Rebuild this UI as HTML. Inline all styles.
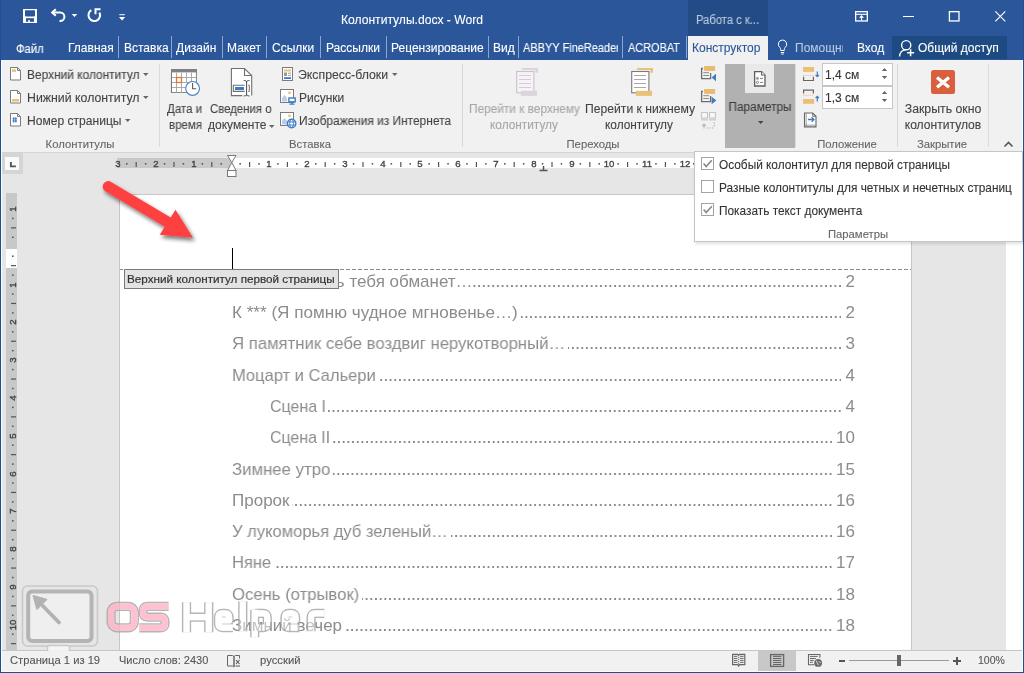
<!DOCTYPE html>
<html><head><meta charset="utf-8"><style>
html,body{margin:0;padding:0}
body{width:1024px;height:673px;position:relative;overflow:hidden;font-family:"Liberation Sans", sans-serif;background:#fff}
.t{position:absolute;white-space:nowrap;line-height:1;will-change:transform;-webkit-text-stroke:0.1px currentColor}
.r{position:absolute;display:block}
</style></head><body>
<div class="r" style="left:0px;top:0px;width:1024px;height:60px;background:#2B579A;"></div>
<div class="r" style="left:0px;top:60px;width:1024px;height:92px;background:#F1F1F1;"></div>
<div class="r" style="left:0px;top:152px;width:1024px;height:1px;background:#D4D4D4;"></div>
<div class="r" style="left:0px;top:153px;width:1024px;height:497px;background:#E6E6E6;"></div>
<div class="r" style="left:119px;top:194px;width:793px;height:456px;background:#C6C6C6;"></div>
<div class="r" style="left:120px;top:195px;width:791px;height:455px;background:#FFFFFF;"></div>
<div class="r" style="left:1006px;top:153px;width:17px;height:497px;background:#FFFFFF;"></div>
<div class="r" style="left:0px;top:650px;width:1024px;height:1px;background:#C6C6C6;"></div>
<div class="r" style="left:0px;top:651px;width:1024px;height:21px;background:#F1F1F1;"></div>
<div class="r" style="left:1px;top:60px;width:1px;height:612px;background:#FCFBF8;"></div>
<div class="r" style="left:1022px;top:60px;width:1px;height:612px;background:#FCFBF8;"></div>
<div class="r" style="left:0px;top:671px;width:1024px;height:1px;background:#FCFBF8;"></div>
<div class="r" style="left:0px;top:0px;width:1px;height:673px;background:#1F4E94;"></div>
<div class="r" style="left:1023px;top:0px;width:1px;height:673px;background:#1F4E94;"></div>
<div class="r" style="left:0px;top:672px;width:1024px;height:1px;background:#1F4E94;"></div>
<div class="r" style="left:688px;top:0px;width:80px;height:36px;background:#234B85;"></div>
<div class="t" style="left:696.00px;top:14.00px;font-size:12px;color:#BAC8DE;transform:scaleX(0.935);transform-origin:0 0;">Работа с к...</div>
<div class="t" style="left:340.50px;top:14.00px;font-size:12.1px;color:#FFFFFF;">Колонтитулы.docx - Word</div>
<svg class="r" style="left:22px;top:8px;" width="16" height="16" viewBox="0 0 16 16"><rect x="1" y="1" width="14" height="14" fill="#fff"/><path d="M3 2.3h10v5.4l-0.9 0.9H3.9L3 7.7z" fill="#2B579A"/><rect x="4" y="10.2" width="8" height="3.6" fill="#2B579A"/><rect x="6" y="12.2" width="2" height="1.6" fill="#fff"/></svg>
<svg class="r" style="left:50px;top:7px;" width="18" height="17" viewBox="0 0 18 17"><path d="M5.8 2.2L2.2 5.5 5.8 8.8" fill="none" stroke="#fff" stroke-width="2.1"/><path d="M3 5.5h7.2a4.2 4.2 0 0 1 0 8.4H9.5" fill="none" stroke="#fff" stroke-width="2"/></svg>
<svg class="r" style="left:71px;top:13px;" width="7" height="5" viewBox="0 0 7 5"><path d="M0.7 1h5.6l-2.8 3z" fill="#fff"/></svg>
<svg class="r" style="left:86px;top:7px;" width="16" height="17" viewBox="0 0 16 17"><path d="M5.3 3.2A5.8 5.8 0 1 0 13.4 5.5" fill="none" stroke="#fff" stroke-width="2"/><path d="M9.5 7.2V2.2h5" fill="none" stroke="#fff" stroke-width="2"/></svg>
<svg class="r" style="left:118px;top:13px;" width="8" height="9" viewBox="0 0 8 9"><rect x="1.3" y="1.2" width="5.5" height="1" fill="#fff"/><path d="M1 4h6.2l-3.1 3.5z" fill="#fff"/></svg>
<svg class="r" style="left:854px;top:10px;" width="16" height="12" viewBox="0 0 16 12"><rect x="1.65" y="1.65" width="11.7" height="9.3" fill="none" stroke="#fff" stroke-width="1.3"/><path d="M1.6 4.3h11.8" stroke="#fff" stroke-width="1.1"/><path d="M7.5 10.6V6M5.6 7.8l1.9-1.9 1.9 1.9" fill="none" stroke="#fff" stroke-width="1.1"/></svg>
<div class="r" style="left:903px;top:15.6px;width:10.5px;height:1.3px;background:#FFFFFF;"></div>
<svg class="r" style="left:947px;top:10px;" width="14" height="12" viewBox="0 0 14 12"><rect x="2.4" y="1.65" width="9.6" height="9.3" fill="none" stroke="#fff" stroke-width="1.3"/></svg>
<svg class="r" style="left:993px;top:10px;" width="14" height="13" viewBox="0 0 14 13"><path d="M2.3 1.3l10 10M12.3 1.3l-10 10" stroke="#fff" stroke-width="1.15"/></svg>
<div class="t" style="left:16.00px;top:43.00px;font-size:12px;color:#FFFFFF;transform:scaleX(0.94);transform-origin:0 0;">Файл</div>
<div class="t" style="left:68.20px;top:42.00px;font-size:12px;color:#FFFFFF;">Главная</div>
<div class="t" style="left:123.50px;top:42.00px;font-size:12px;color:#FFFFFF;">Вставка</div>
<div class="t" style="left:176.00px;top:42.00px;font-size:12px;color:#FFFFFF;">Дизайн</div>
<div class="t" style="left:227.00px;top:42.00px;font-size:12px;color:#FFFFFF;">Макет</div>
<div class="t" style="left:272.00px;top:42.00px;font-size:12px;color:#FFFFFF;">Ссылки</div>
<div class="t" style="left:326.00px;top:42.00px;font-size:12px;color:#FFFFFF;">Рассылки</div>
<div class="t" style="left:391.00px;top:42.00px;font-size:12px;color:#FFFFFF;">Рецензирование</div>
<div class="t" style="left:493.00px;top:42.00px;font-size:12px;color:#FFFFFF;">Вид</div>
<div class="r" style="left:523px;top:36px;width:95px;height:22px;overflow:hidden"><div class="t" style="left:0;top:6px;font-size:12px;color:#fff;transform:scaleX(0.915);transform-origin:0 0">ABBYY FineReader</div></div>
<div class="t" style="left:628.00px;top:42.00px;font-size:12px;color:#FFFFFF;transform:scaleX(0.91);transform-origin:0 0;">ACROBAT</div>
<div class="r" style="left:118px;top:36px;width:1px;height:22px;background:#8EA6CC;"></div>
<div class="r" style="left:171px;top:36px;width:1px;height:22px;background:#8EA6CC;"></div>
<div class="r" style="left:222px;top:36px;width:1px;height:22px;background:#8EA6CC;"></div>
<div class="r" style="left:266px;top:36px;width:1px;height:22px;background:#8EA6CC;"></div>
<div class="r" style="left:320px;top:36px;width:1px;height:22px;background:#8EA6CC;"></div>
<div class="r" style="left:386px;top:36px;width:1px;height:22px;background:#8EA6CC;"></div>
<div class="r" style="left:488px;top:36px;width:1px;height:22px;background:#8EA6CC;"></div>
<div class="r" style="left:518px;top:36px;width:1px;height:22px;background:#8EA6CC;"></div>
<div class="r" style="left:622px;top:36px;width:1px;height:22px;background:#8EA6CC;"></div>
<div class="r" style="left:686px;top:36px;width:1px;height:22px;background:#8EA6CC;"></div>
<div class="r" style="left:688px;top:36px;width:80px;height:24px;background:#F1F1F1;"></div>
<div class="t" style="left:692.00px;top:42.00px;font-size:12px;color:#2B579A;">Конструктор</div>
<svg class="r" style="left:777px;top:39px;" width="11" height="16" viewBox="0 0 11 16"><path d="M5.5 1a4.2 4.2 0 0 0-2.6 7.5c.5.5.8 1.2.8 2v1h3.6v-1c0-.8.3-1.5.8-2A4.2 4.2 0 0 0 5.5 1z" fill="none" stroke="#fff" stroke-width="1"/><path d="M3.8 13.5h3.4M4.3 15h2.4" stroke="#fff"/></svg>
<div class="r" style="left:795px;top:36px;width:48px;height:22px;overflow:hidden"><div class="t" style="left:0;top:6px;font-size:12px;color:#B9C8DF">Помощник</div></div>
<div class="t" style="left:857.00px;top:42.00px;font-size:12px;color:#FFFFFF;">Вход</div>
<div class="r" style="left:892px;top:36px;width:115px;height:23px;background:#1E4A82;"></div>
<svg class="r" style="left:898px;top:38px;" width="18" height="20" viewBox="0 0 18 20"><circle cx="8.2" cy="7.2" r="4.6" fill="none" stroke="#fff" stroke-width="1.4"/><path d="M1.6 18.5c0-4 2.6-6.6 6.2-6.8" fill="none" stroke="#fff" stroke-width="1.4"/><path d="M12.6 11.2v7M9.1 14.7h7" stroke="#fff" stroke-width="1.5"/></svg>
<div class="t" style="left:918.00px;top:42.00px;font-size:12px;color:#FFFFFF;">Общий доступ</div>
<div class="r" style="left:159px;top:64px;width:1px;height:83px;background:#DADADA;"></div>
<div class="r" style="left:462px;top:64px;width:1px;height:83px;background:#DADADA;"></div>
<div class="r" style="left:897px;top:64px;width:1px;height:83px;background:#DADADA;"></div>
<div class="r" style="left:988px;top:64px;width:1px;height:83px;background:#DADADA;"></div>
<div class="t" style="left:-119.70px;width:400px;text-align:center;top:139.00px;font-size:11.3px;color:#666666;">Колонтитулы</div>
<div class="t" style="left:110.00px;width:400px;text-align:center;top:139.00px;font-size:11.3px;color:#666666;">Вставка</div>
<div class="t" style="left:393.00px;width:400px;text-align:center;top:139.00px;font-size:11.3px;color:#666666;">Переходы</div>
<div class="t" style="left:646.50px;width:400px;text-align:center;top:139.00px;font-size:11.3px;color:#666666;">Положение</div>
<div class="t" style="left:742.30px;width:400px;text-align:center;top:139.00px;font-size:11.3px;color:#666666;">Закрытие</div>
<svg class="r" style="left:1003px;top:140px;" width="11" height="8" viewBox="0 0 11 8"><path d="M1.5 6.5L5.5 2.5 9.5 6.5" fill="none" stroke="#555" stroke-width="1.6"/></svg>
<svg class="r" style="left:10px;top:67px;" width="12" height="14" viewBox="0 0 12 14"><path d="M0.5 0.5h7l3 3v9.5h-10z" fill="#fff" stroke="#7B7B7B"/><path d="M7.5 0.5v3h3" fill="none" stroke="#7B7B7B"/><rect x="2" y="2.3" width="4" height="2.6" fill="#EBC178"/></svg>
<svg class="r" style="left:10px;top:90px;" width="12" height="14" viewBox="0 0 12 14"><path d="M0.5 0.5h7l3 3v9.5h-10z" fill="#fff" stroke="#7B7B7B"/><path d="M7.5 0.5v3h3" fill="none" stroke="#7B7B7B"/><rect x="2" y="9" width="7" height="2.6" fill="#EBC178"/></svg>
<svg class="r" style="left:10px;top:113px;" width="12" height="14" viewBox="0 0 12 14"><path d="M0.5 0.5h7l3 3v9.5h-10z" fill="#fff" stroke="#7B7B7B"/><path d="M7.5 0.5v3h3" fill="none" stroke="#7B7B7B"/><path d="M3.7 4.3v5.2M5.8 4.3v5.2M2.5 5.8h4.6M2.5 8h4.6" stroke="#3E7BC4" stroke-width="1.1"/></svg>
<div class="t" style="left:26.50px;top:69.00px;font-size:12px;color:#444444;transform:scaleX(0.9922);transform-origin:0 0;">Верхний колонтитул</div>
<div class="t" style="left:26.50px;top:92.00px;font-size:12px;color:#444444;transform:scaleX(1.0268);transform-origin:0 0;">Нижний колонтитул</div>
<div class="t" style="left:26.50px;top:115.00px;font-size:12px;color:#444444;transform:scaleX(1.0059);transform-origin:0 0;">Номер страницы</div>
<svg class="r" style="left:143px;top:73px;" width="6" height="4" viewBox="0 0 6 4"><path d="M0 0h5.5l-2.75 3z" fill="#666"/></svg>
<svg class="r" style="left:143px;top:96px;" width="6" height="4" viewBox="0 0 6 4"><path d="M0 0h5.5l-2.75 3z" fill="#666"/></svg>
<svg class="r" style="left:124.5px;top:119px;" width="6" height="4" viewBox="0 0 6 4"><path d="M0 0h5.5l-2.75 3z" fill="#666"/></svg>
<svg class="r" style="left:170px;top:68px;" width="32" height="30" viewBox="0 0 32 30"><path d="M1.5 4v20.5h17M26.3 4v10.5" fill="none" stroke="#7A7A7A" stroke-width="1.1"/><rect x="1" y="1" width="26" height="3.6" fill="#808080"/><rect x="2" y="4.6" width="23.8" height="19.5" fill="#fff"/><path d="M6.5 4.6v20M11.5 4.6v20M16.5 4.6v10M21.5 4.6v10M2 9.5h24M2 14.5h24M2 19.5h16" stroke="#ABABAB" stroke-width="1"/><rect x="6.5" y="9.5" width="5" height="5" fill="#fff" stroke="#E0782F" stroke-width="1.3"/><circle cx="22.6" cy="20.4" r="6.9" fill="#fff" stroke="#4A86C8" stroke-width="1.2"/><path d="M22.6 15v5.7h3.6" fill="none" stroke="#5A5A5A" stroke-width="1.1"/></svg>
<div class="t" style="left:166.50px;top:103.00px;font-size:12px;color:#444444;transform:scaleX(0.9560);transform-origin:0 0;">Дата и</div>
<div class="t" style="left:168.50px;top:119.00px;font-size:12px;color:#444444;transform:scaleX(0.9573);transform-origin:0 0;">время</div>
<svg class="r" style="left:230px;top:67px;" width="24" height="30" viewBox="0 0 24 30"><path d="M1.4 1.5h13.1l7.2 7v20.1H1.4z" fill="#fff"/><path d="M12.2 28.6H1.4V1.5h13.1l7.2 7v20.1" fill="none" stroke="#707070" stroke-width="1.1"/><path d="M14.5 1.5v7h7.2" fill="none" stroke="#707070" stroke-width="1.1"/><path d="M14.6 18.2H3.3v6.2h11.3" fill="none" stroke="#707070" stroke-width="1.1"/><rect x="5" y="20" width="9" height="3" fill="#3E7BC4"/><path d="M18.2 18.2h1.1v6.2h-1.1" fill="none" stroke="#707070" stroke-width="1"/><path d="M16.6 14v14.4M13.7 13.5c1.6 0 2.9.4 2.9 1.4c0-1 1.3-1.4 2.9-1.4M13.7 28.9c1.6 0 2.9-.4 2.9-1.4c0 1 1.3 1.4 2.9 1.4" fill="none" stroke="#4A4A4A" stroke-width="1"/></svg>
<div class="t" style="left:210.00px;top:103.00px;font-size:12px;color:#444444;transform:scaleX(0.9487);transform-origin:0 0;">Сведения о</div>
<div class="t" style="left:207.50px;top:119.00px;font-size:12px;color:#444444;transform:scaleX(0.9998);transform-origin:0 0;">документе</div>
<svg class="r" style="left:268.5px;top:125px;" width="6" height="4" viewBox="0 0 6 4"><path d="M0 0h5.5l-2.75 3z" fill="#666"/></svg>
<svg class="r" style="left:281px;top:66px;" width="13" height="15" viewBox="0 0 13 15"><rect x="1.5" y="1.5" width="10" height="13" fill="#fff" stroke="#7B7B7B"/><rect x="3" y="3.5" width="7" height="2" fill="#EBC178"/><rect x="3" y="6.5" width="3" height="3.5" fill="#9A9A9A"/><path d="M7 7.2h3M7 9.3h3" stroke="#9A9A9A"/><rect x="3" y="11.2" width="7" height="1.8" fill="#3E7BC4"/></svg>
<div class="t" style="left:298.20px;top:69.00px;font-size:12px;color:#444444;transform:scaleX(1.0233);transform-origin:0 0;">Экспресс-блоки</div>
<svg class="r" style="left:392px;top:73px;" width="6" height="4" viewBox="0 0 6 4"><path d="M0 0h5.5l-2.75 3z" fill="#666"/></svg>
<svg class="r" style="left:280px;top:89px;" width="17" height="17" viewBox="0 0 17 17"><rect x="0.5" y="0.5" width="13" height="13" fill="#fff" stroke="#7B7B7B"/><circle cx="9.5" cy="3.8" r="1.4" fill="#EBC178"/><path d="M2 12.5V8.5l2.5-2.5 2.5 2.5v4z" fill="#B7D0EA"/><rect x="8.9" y="9" width="6.3" height="3.8" fill="#fff" stroke="#3E7BC4" stroke-width="1.4"/><path d="M12 13v1.6M9.5 15.2h5" stroke="#3E7BC4" stroke-width="1.3"/></svg>
<div class="t" style="left:298.70px;top:92.00px;font-size:12px;color:#444444;">Рисунки</div>
<svg class="r" style="left:280px;top:112px;" width="17" height="17" viewBox="0 0 17 17"><rect x="0.5" y="0.5" width="13" height="13" fill="#fff" stroke="#7B7B7B"/><circle cx="9.5" cy="3.8" r="1.4" fill="#EBC178"/><path d="M2 12.5V8.5l2.5-2.5 2.5 2.5v4z" fill="#B7D0EA"/><circle cx="11.6" cy="11.5" r="4.2" fill="#fff" stroke="#3E7BC4" stroke-width="1.4"/><path d="M8.3 10h6.6M8.3 13h6.6" fill="none" stroke="#3E7BC4" stroke-width="1"/><ellipse cx="11.6" cy="11.5" rx="2" ry="4" fill="none" stroke="#3E7BC4" stroke-width="0.9"/></svg>
<div class="t" style="left:298.70px;top:115.00px;font-size:12px;color:#444444;transform:scaleX(0.9922);transform-origin:0 0;">Изображения из Интернета</div>
<svg class="r" style="left:515px;top:67px;" width="24" height="30" viewBox="0 0 24 30"><path d="M7 0.9h16v4.8h-2.7V2.9H7z" fill="#DAD5DA"/><rect x="1.7" y="4.5" width="17.2" height="21.3" fill="#F7F2F7" stroke="#C8C3C8" stroke-width="1.1"/><path d="M4 8.5h12M4 12.5h12M4 16.5h12M4 20.5h12" stroke="#D3CED3" stroke-width="1"/><rect x="5.9" y="23.8" width="16.1" height="5.1" fill="#DAD5DA"/></svg>
<div class="t" style="left:469.00px;top:103.00px;font-size:12px;color:#A6A6A6;transform:scaleX(0.9857);transform-origin:0 0;">Перейти к верхнему</div>
<div class="t" style="left:490.00px;top:120.00px;font-size:11.85px;color:#A6A6A6;">колонтитулу</div>
<svg class="r" style="left:630px;top:67px;" width="24" height="30" viewBox="0 0 24 30"><path d="M7 0.9h16v4.8h-2.7V2.9H7z" fill="#EBC178"/><rect x="1.7" y="4.5" width="17.2" height="21.3" fill="#fff" stroke="#7A7A7A" stroke-width="1.1"/><path d="M4 8.5h12M4 12.5h12M4 16.5h12M4 20.5h12" stroke="#A8A8A8" stroke-width="1"/><rect x="5.9" y="23.8" width="16.1" height="5.1" fill="#EBC178"/></svg>
<div class="t" style="left:584.80px;top:103.00px;font-size:12px;color:#444444;transform:scaleX(1.0137);transform-origin:0 0;">Перейти к нижнему</div>
<div class="t" style="left:604.70px;top:120.00px;font-size:11.85px;color:#444444;">колонтитулу</div>
<svg class="r" style="left:696px;top:62px;" width="26" height="70" viewBox="0 0 26 70"><path d="M7 6.5H5.6V16.7H14.6V11" fill="none" stroke="#6E6E6E" stroke-width="1.3"/><rect x="8.1" y="4" width="11" height="4.9" fill="#E8BC6E"/><path d="M7.3 10.7h5.7M7.3 13.5h5.7" stroke="#8A8A8A" stroke-width="1"/><path d="M20 11.7v7.6l-4.4-3.8z" fill="#3E7BC4"/><path d="M7 29.5H5.6V39.7H14.6V34" fill="none" stroke="#6E6E6E" stroke-width="1.3"/><rect x="8.1" y="27" width="11" height="4.9" fill="#E8BC6E"/><path d="M7.3 33.7h5.7M7.3 36.5h5.7" stroke="#8A8A8A" stroke-width="1"/><path d="M15.6 34.7v7.6l4.8-3.8z" fill="#3E7BC4"/><path d="M5.5 50.5h6v5.5h-6zM13.5 50.5h6v5.5h-6z" fill="#F8F6F8" stroke="#C6C6C6" stroke-width="1.1"/><rect x="5" y="56.6" width="7" height="2" fill="#D2D2D2"/><rect x="13" y="56.6" width="7" height="2" fill="#D2D2D2"/><path d="M8 66.5v-4.5M6.2 63.8L8 62l1.8 1.8" fill="none" stroke="#B0B0B0" stroke-width="1.1"/><path d="M11 66h1.2M13.5 66h1.2M16 66h1.2M18.2 60.5v1.2M18.2 63v1.2" stroke="#A8A8A8" stroke-width="1.2"/></svg>
<div class="r" style="left:725px;top:64px;width:70px;height:84px;background:#B1B1B1;"></div>
<div class="r" style="left:745px;top:64px;width:29px;height:29px;background:#E9E9E9;"></div>
<svg class="r" style="left:753px;top:70px;" width="14" height="18" viewBox="0 0 14 18"><path d="M1.6 1.6h7l3.4 3.4v11h-10.4z" fill="#fff" stroke="#5E5E5E" stroke-width="1.3"/><path d="M8.6 1.6v3.4h3.4" fill="#fff" stroke="#5E5E5E" stroke-width="1.1"/><circle cx="4.4" cy="8.4" r="1.1" fill="#999" stroke="#888" stroke-width="0.6"/><circle cx="4.4" cy="12.4" r="1.1" fill="none" stroke="#777" stroke-width="0.9"/><path d="M7 8.4h3M7 12.4h3" stroke="#777" stroke-width="0.9"/></svg>
<div class="t" style="left:560.00px;width:400px;text-align:center;top:101.00px;font-size:12px;color:#3C3C3C;transform:scaleX(0.9849);transform-origin:50% 0;">Параметры</div>
<svg class="r" style="left:757.8px;top:121px;" width="6" height="4" viewBox="0 0 6 4"><path d="M0 0h5.5l-2.75 3z" fill="#444"/></svg>
<div class="r" style="left:795px;top:64px;width:1px;height:83px;background:#DADADA;"></div>
<svg class="r" style="left:798px;top:62px;" width="26" height="70" viewBox="0 0 26 70"><rect x="5" y="5" width="11.1" height="4.9" fill="#EDBE76"/><path d="M5 13.5h11" stroke="#EDBE76" stroke-width="1.1" stroke-dasharray="1.1 1.1"/><path d="M5.6 14.8v3.7h9.8v-3.7" fill="none" stroke="#666" stroke-width="1.2"/><path d="M19.3 9.6v5M17.6 12.9l1.7 1.8 1.7-1.8" fill="none" stroke="#3E7BC4" stroke-width="1.2"/><path d="M5.6 31.4v-3.3h9.8v3.3" fill="none" stroke="#666" stroke-width="1.2"/><path d="M5 33.3h11" stroke="#EDBE76" stroke-width="1.1" stroke-dasharray="1.1 1.1"/><rect x="5" y="37" width="11.1" height="4.8" fill="#EDBE76"/><path d="M19.3 39.5v-5M17.6 36.2l1.7-1.8 1.7 1.8" fill="none" stroke="#3E7BC4" stroke-width="1.2"/><path d="M6.5 51h8.2l3.3 3.3v10.6H6.5z" fill="#fff" stroke="#666" stroke-width="1.1"/><path d="M14.7 51v3.3h3.3" fill="none" stroke="#666" stroke-width="0.9"/><path d="M8.2 51v13.9M6.5 63.2h11.5" stroke="#888" stroke-width="0.8"/><path d="M10 57.5h6M13.6 55.2l2.4 2.3-2.4 2.3" fill="none" stroke="#3E7BC4" stroke-width="1.3"/></svg>
<div class="r" style="left:822px;top:63px;width:71px;height:23px;background:#C6C6C6;"></div>
<div class="r" style="left:823px;top:64px;width:69px;height:21px;background:#FFFFFF;"></div>
<div class="t" style="left:825.30px;top:69.00px;font-size:12px;color:#333;">1,4 см</div>
<svg class="r" style="left:881px;top:67px;" width="7" height="14" viewBox="0 0 7 14"><path d="M0.8 4h5.4L3.5 1z" fill="#666"/><path d="M0.8 9h5.4L3.5 12z" fill="#666"/></svg>
<div class="r" style="left:822px;top:86px;width:71px;height:23px;background:#C6C6C6;"></div>
<div class="r" style="left:823px;top:87px;width:69px;height:21px;background:#FFFFFF;"></div>
<div class="t" style="left:825.30px;top:92.00px;font-size:12px;color:#333;">1,3 см</div>
<svg class="r" style="left:881px;top:90px;" width="7" height="14" viewBox="0 0 7 14"><path d="M0.8 4h5.4L3.5 1z" fill="#666"/><path d="M0.8 9h5.4L3.5 12z" fill="#666"/></svg>
<svg class="r" style="left:931px;top:70px;" width="24" height="24" viewBox="0 0 24 24"><rect x="0" y="0" width="24" height="24" rx="2.5" fill="#D9603E"/><path d="M6 7.5L18 17.2M18 7.5L6 17.2" stroke="#fff" stroke-width="3.3"/></svg>
<div class="t" style="left:742.80px;width:400px;text-align:center;top:103.00px;font-size:12px;color:#444444;transform:scaleX(1.0230);transform-origin:50% 0;">Закрыть окно</div>
<div class="t" style="left:742.70px;width:400px;text-align:center;top:119.00px;font-size:12px;color:#444444;transform:scaleX(1.0068);transform-origin:50% 0;">колонтитулов</div>
<div class="r" style="left:2px;top:153px;width:21px;height:21px;background:#D5D5D5;"></div>
<div class="r" style="left:5px;top:157px;width:14px;height:13px;background:#FAFAFA;"></div>
<svg class="r" style="left:9px;top:161px;" width="8" height="8" viewBox="0 0 8 8"><path d="M1.9 1v4.4h5" fill="none" stroke="#555" stroke-width="1.9"/></svg>
<div class="r" style="left:117px;top:158px;width:114px;height:10px;background:#C8C8C8;"></div>
<div class="r" style="left:231px;top:158px;width:470px;height:10px;background:#FFFFFF;"></div>
<div class="t" style="left:-82.10px;width:400px;text-align:center;top:159.00px;font-size:9.6px;color:#444;-webkit-text-stroke:0.35px #444;">3</div>
<div class="t" style="left:-44.30px;width:400px;text-align:center;top:159.00px;font-size:9.6px;color:#444;-webkit-text-stroke:0.35px #444;">2</div>
<div class="t" style="left:-6.50px;width:400px;text-align:center;top:159.00px;font-size:9.6px;color:#444;-webkit-text-stroke:0.35px #444;">1</div>
<div class="t" style="left:69.10px;width:400px;text-align:center;top:159.00px;font-size:9.6px;color:#444;-webkit-text-stroke:0.35px #444;">1</div>
<div class="t" style="left:106.90px;width:400px;text-align:center;top:159.00px;font-size:9.6px;color:#444;-webkit-text-stroke:0.35px #444;">2</div>
<div class="t" style="left:144.70px;width:400px;text-align:center;top:159.00px;font-size:9.6px;color:#444;-webkit-text-stroke:0.35px #444;">3</div>
<div class="t" style="left:182.50px;width:400px;text-align:center;top:159.00px;font-size:9.6px;color:#444;-webkit-text-stroke:0.35px #444;">4</div>
<div class="t" style="left:220.30px;width:400px;text-align:center;top:159.00px;font-size:9.6px;color:#444;-webkit-text-stroke:0.35px #444;">5</div>
<div class="t" style="left:258.10px;width:400px;text-align:center;top:159.00px;font-size:9.6px;color:#444;-webkit-text-stroke:0.35px #444;">6</div>
<div class="t" style="left:295.90px;width:400px;text-align:center;top:159.00px;font-size:9.6px;color:#444;-webkit-text-stroke:0.35px #444;">7</div>
<div class="t" style="left:333.70px;width:400px;text-align:center;top:159.00px;font-size:9.6px;color:#444;-webkit-text-stroke:0.35px #444;">8</div>
<div class="t" style="left:371.50px;width:400px;text-align:center;top:159.00px;font-size:9.6px;color:#444;-webkit-text-stroke:0.35px #444;">9</div>
<div class="t" style="left:409.30px;width:400px;text-align:center;top:159.00px;font-size:9.6px;color:#444;-webkit-text-stroke:0.35px #444;">10</div>
<div class="t" style="left:447.10px;width:400px;text-align:center;top:159.00px;font-size:9.6px;color:#444;-webkit-text-stroke:0.35px #444;">11</div>
<div class="t" style="left:484.90px;width:400px;text-align:center;top:159.00px;font-size:9.6px;color:#444;-webkit-text-stroke:0.35px #444;">12</div>
<svg class="r" style="left:0;top:0" width="1024" height="673" viewBox="0 0 1024 673"><rect x="126.00" y="163" width="1.5" height="1.6" fill="#555"/><rect x="135.60" y="162" width="1.2" height="5" fill="#555"/><rect x="144.90" y="163" width="1.5" height="1.6" fill="#555"/><rect x="163.80" y="163" width="1.5" height="1.6" fill="#555"/><rect x="173.40" y="162" width="1.2" height="5" fill="#555"/><rect x="182.70" y="163" width="1.5" height="1.6" fill="#555"/><rect x="201.60" y="163" width="1.5" height="1.6" fill="#555"/><rect x="211.20" y="162" width="1.2" height="5" fill="#555"/><rect x="220.50" y="163" width="1.5" height="1.6" fill="#555"/><rect x="239.40" y="163" width="1.5" height="1.6" fill="#555"/><rect x="249.00" y="162" width="1.2" height="5" fill="#555"/><rect x="258.30" y="163" width="1.5" height="1.6" fill="#555"/><rect x="277.20" y="163" width="1.5" height="1.6" fill="#555"/><rect x="286.80" y="162" width="1.2" height="5" fill="#555"/><rect x="296.10" y="163" width="1.5" height="1.6" fill="#555"/><rect x="315.00" y="163" width="1.5" height="1.6" fill="#555"/><rect x="324.60" y="162" width="1.2" height="5" fill="#555"/><rect x="333.90" y="163" width="1.5" height="1.6" fill="#555"/><rect x="352.80" y="163" width="1.5" height="1.6" fill="#555"/><rect x="362.40" y="162" width="1.2" height="5" fill="#555"/><rect x="371.70" y="163" width="1.5" height="1.6" fill="#555"/><rect x="390.60" y="163" width="1.5" height="1.6" fill="#555"/><rect x="400.20" y="162" width="1.2" height="5" fill="#555"/><rect x="409.50" y="163" width="1.5" height="1.6" fill="#555"/><rect x="428.40" y="163" width="1.5" height="1.6" fill="#555"/><rect x="438.00" y="162" width="1.2" height="5" fill="#555"/><rect x="447.30" y="163" width="1.5" height="1.6" fill="#555"/><rect x="466.20" y="163" width="1.5" height="1.6" fill="#555"/><rect x="475.80" y="162" width="1.2" height="5" fill="#555"/><rect x="485.10" y="163" width="1.5" height="1.6" fill="#555"/><rect x="504.00" y="163" width="1.5" height="1.6" fill="#555"/><rect x="513.60" y="162" width="1.2" height="5" fill="#555"/><rect x="522.90" y="163" width="1.5" height="1.6" fill="#555"/><rect x="541.80" y="163" width="1.5" height="1.6" fill="#555"/><rect x="551.40" y="162" width="1.2" height="5" fill="#555"/><rect x="560.70" y="163" width="1.5" height="1.6" fill="#555"/><rect x="579.60" y="163" width="1.5" height="1.6" fill="#555"/><rect x="589.20" y="162" width="1.2" height="5" fill="#555"/><rect x="598.50" y="163" width="1.5" height="1.6" fill="#555"/><rect x="617.40" y="163" width="1.5" height="1.6" fill="#555"/><rect x="627.00" y="162" width="1.2" height="5" fill="#555"/><rect x="636.30" y="163" width="1.5" height="1.6" fill="#555"/><rect x="655.20" y="163" width="1.5" height="1.6" fill="#555"/><rect x="664.80" y="162" width="1.2" height="5" fill="#555"/><rect x="674.10" y="163" width="1.5" height="1.6" fill="#555"/><rect x="693.00" y="163" width="1.5" height="1.6" fill="#555"/></svg>
<svg class="r" style="left:226px;top:154px;" width="12" height="24" viewBox="0 0 12 24"><path d="M1.5 1.5h8.5L5.75 8.5z" fill="#fff" stroke="#777"/><path d="M5.75 8.5L1.5 16.5h8.5z" fill="#fff" stroke="#777"/><rect x="1.5" y="16.5" width="8.5" height="6" fill="#fff" stroke="#777"/></svg>
<svg class="r" style="left:539px;top:166px;" width="9" height="6" viewBox="0 0 9 6"><path d="M4.5 0v4M0.5 4.5h8" stroke="#555" stroke-width="1.5"/></svg>
<div class="r" style="left:6px;top:193px;width:11px;height:56px;background:#C8C8C8;"></div>
<div class="r" style="left:6px;top:249px;width:11px;height:19px;background:#FFFFFF;"></div>
<div class="r" style="left:6px;top:268px;width:11px;height:382px;background:#C8C8C8;"></div>
<div class="t" style="left:-2.1999999999999993px;top:203.95px;width:30px;height:10px;text-align:center;font-size:9.6px;line-height:10px;color:#444;-webkit-text-stroke:0.35px #444;transform:rotate(-90deg)">1</div>
<div class="t" style="left:-2.1999999999999993px;top:279.55px;width:30px;height:10px;text-align:center;font-size:9.6px;line-height:10px;color:#444;-webkit-text-stroke:0.35px #444;transform:rotate(-90deg)">1</div>
<div class="t" style="left:-2.1999999999999993px;top:317.35px;width:30px;height:10px;text-align:center;font-size:9.6px;line-height:10px;color:#444;-webkit-text-stroke:0.35px #444;transform:rotate(-90deg)">2</div>
<div class="t" style="left:-2.1999999999999993px;top:355.15px;width:30px;height:10px;text-align:center;font-size:9.6px;line-height:10px;color:#444;-webkit-text-stroke:0.35px #444;transform:rotate(-90deg)">3</div>
<div class="t" style="left:-2.1999999999999993px;top:392.95px;width:30px;height:10px;text-align:center;font-size:9.6px;line-height:10px;color:#444;-webkit-text-stroke:0.35px #444;transform:rotate(-90deg)">4</div>
<div class="t" style="left:-2.1999999999999993px;top:430.75px;width:30px;height:10px;text-align:center;font-size:9.6px;line-height:10px;color:#444;-webkit-text-stroke:0.35px #444;transform:rotate(-90deg)">5</div>
<div class="t" style="left:-2.1999999999999993px;top:468.54999999999995px;width:30px;height:10px;text-align:center;font-size:9.6px;line-height:10px;color:#444;-webkit-text-stroke:0.35px #444;transform:rotate(-90deg)">6</div>
<div class="t" style="left:-2.1999999999999993px;top:506.34999999999997px;width:30px;height:10px;text-align:center;font-size:9.6px;line-height:10px;color:#444;-webkit-text-stroke:0.35px #444;transform:rotate(-90deg)">7</div>
<div class="t" style="left:-2.1999999999999993px;top:544.15px;width:30px;height:10px;text-align:center;font-size:9.6px;line-height:10px;color:#444;-webkit-text-stroke:0.35px #444;transform:rotate(-90deg)">8</div>
<div class="t" style="left:-2.1999999999999993px;top:581.95px;width:30px;height:10px;text-align:center;font-size:9.6px;line-height:10px;color:#444;-webkit-text-stroke:0.35px #444;transform:rotate(-90deg)">9</div>
<div class="t" style="left:-2.1999999999999993px;top:619.75px;width:30px;height:10px;text-align:center;font-size:9.6px;line-height:10px;color:#444;-webkit-text-stroke:0.35px #444;transform:rotate(-90deg)">10</div>
<svg class="r" style="left:0;top:0" width="1024" height="673" viewBox="0 0 1024 673"><rect x="12" y="217.65" width="1.6" height="1.5" fill="#555"/><rect x="11" y="227.25" width="5" height="1.2" fill="#555"/><rect x="12" y="236.55" width="1.6" height="1.5" fill="#555"/><rect x="12" y="255.45" width="1.6" height="1.5" fill="#555"/><rect x="11" y="265.05" width="5" height="1.2" fill="#555"/><rect x="12" y="274.35" width="1.6" height="1.5" fill="#555"/><rect x="12" y="293.25" width="1.6" height="1.5" fill="#555"/><rect x="11" y="302.85" width="5" height="1.2" fill="#555"/><rect x="12" y="312.15" width="1.6" height="1.5" fill="#555"/><rect x="12" y="331.05" width="1.6" height="1.5" fill="#555"/><rect x="11" y="340.65" width="5" height="1.2" fill="#555"/><rect x="12" y="349.95" width="1.6" height="1.5" fill="#555"/><rect x="12" y="368.85" width="1.6" height="1.5" fill="#555"/><rect x="11" y="378.45" width="5" height="1.2" fill="#555"/><rect x="12" y="387.75" width="1.6" height="1.5" fill="#555"/><rect x="12" y="406.65" width="1.6" height="1.5" fill="#555"/><rect x="11" y="416.25" width="5" height="1.2" fill="#555"/><rect x="12" y="425.55" width="1.6" height="1.5" fill="#555"/><rect x="12" y="444.45" width="1.6" height="1.5" fill="#555"/><rect x="11" y="454.05" width="5" height="1.2" fill="#555"/><rect x="12" y="463.35" width="1.6" height="1.5" fill="#555"/><rect x="12" y="482.25" width="1.6" height="1.5" fill="#555"/><rect x="11" y="491.85" width="5" height="1.2" fill="#555"/><rect x="12" y="501.15" width="1.6" height="1.5" fill="#555"/><rect x="12" y="520.05" width="1.6" height="1.5" fill="#555"/><rect x="11" y="529.65" width="5" height="1.2" fill="#555"/><rect x="12" y="538.95" width="1.6" height="1.5" fill="#555"/><rect x="12" y="557.85" width="1.6" height="1.5" fill="#555"/><rect x="11" y="567.45" width="5" height="1.2" fill="#555"/><rect x="12" y="576.75" width="1.6" height="1.5" fill="#555"/><rect x="12" y="595.65" width="1.6" height="1.5" fill="#555"/><rect x="11" y="605.25" width="5" height="1.2" fill="#555"/><rect x="12" y="614.55" width="1.6" height="1.5" fill="#555"/><rect x="12" y="633.45" width="1.6" height="1.5" fill="#555"/><rect x="11" y="643.05" width="5" height="1.2" fill="#555"/></svg>
<div class="t" style="left:254.30px;top:273.00px;font-size:17px;color:#8C8C8C;-webkit-text-stroke:0;">Если жизнь тебя обманет…</div>
<div class="r" style="left:473.00px;top:285px;width:368.00px;height:2px;background:linear-gradient(90deg,transparent 0 2.9px,#8C8C8C 2.9px 4.7px) right 0 top 0/4.7px 2px repeat-x"></div>
<div class="t" style="left:455.00px;width:400px;text-align:right;top:273.00px;font-size:17px;color:#8C8C8C;-webkit-text-stroke:0;">2</div>
<div class="t" style="left:232.30px;top:304.00px;font-size:17px;color:#8C8C8C;-webkit-text-stroke:0;transform:scaleX(1.0057);transform-origin:0 0;">К *** (Я помню чудное мгновенье…)</div>
<div class="r" style="left:520.60px;top:316px;width:320.40px;height:2px;background:linear-gradient(90deg,transparent 0 2.9px,#8C8C8C 2.9px 4.7px) right 0 top 0/4.7px 2px repeat-x"></div>
<div class="t" style="left:455.00px;width:400px;text-align:right;top:304.00px;font-size:17px;color:#8C8C8C;-webkit-text-stroke:0;">2</div>
<div class="t" style="left:232.30px;top:335.00px;font-size:17px;color:#8C8C8C;-webkit-text-stroke:0;transform:scaleX(0.9837);transform-origin:0 0;">Я памятник себе воздвиг нерукотворный…</div>
<div class="r" style="left:568.00px;top:347px;width:273.00px;height:2px;background:linear-gradient(90deg,transparent 0 2.9px,#8C8C8C 2.9px 4.7px) right 0 top 0/4.7px 2px repeat-x"></div>
<div class="t" style="left:455.00px;width:400px;text-align:right;top:335.00px;font-size:17px;color:#8C8C8C;-webkit-text-stroke:0;">3</div>
<div class="t" style="left:232.30px;top:367.00px;font-size:17px;color:#8C8C8C;-webkit-text-stroke:0;transform:scaleX(0.9715);transform-origin:0 0;">Моцарт и Сальери</div>
<div class="r" style="left:378.50px;top:379px;width:462.50px;height:2px;background:linear-gradient(90deg,transparent 0 2.9px,#8C8C8C 2.9px 4.7px) right 0 top 0/4.7px 2px repeat-x"></div>
<div class="t" style="left:455.00px;width:400px;text-align:right;top:367.00px;font-size:17px;color:#8C8C8C;-webkit-text-stroke:0;">4</div>
<div class="t" style="left:269.80px;top:398.00px;font-size:17px;color:#8C8C8C;-webkit-text-stroke:0;transform:scaleX(0.9401);transform-origin:0 0;">Сцена I</div>
<div class="r" style="left:328.30px;top:410px;width:512.70px;height:2px;background:linear-gradient(90deg,transparent 0 2.9px,#8C8C8C 2.9px 4.7px) right 0 top 0/4.7px 2px repeat-x"></div>
<div class="t" style="left:455.00px;width:400px;text-align:right;top:398.00px;font-size:17px;color:#8C8C8C;-webkit-text-stroke:0;">4</div>
<div class="t" style="left:269.80px;top:429.00px;font-size:17px;color:#8C8C8C;-webkit-text-stroke:0;transform:scaleX(0.9364);transform-origin:0 0;">Сцена II</div>
<div class="r" style="left:332.50px;top:441px;width:499.10px;height:2px;background:linear-gradient(90deg,transparent 0 2.9px,#8C8C8C 2.9px 4.7px) right 0 top 0/4.7px 2px repeat-x"></div>
<div class="t" style="left:455.00px;width:400px;text-align:right;top:429.00px;font-size:17px;color:#8C8C8C;-webkit-text-stroke:0;">10</div>
<div class="t" style="left:232.30px;top:461.00px;font-size:17px;color:#8C8C8C;-webkit-text-stroke:0;transform:scaleX(0.9863);transform-origin:0 0;">Зимнее утро</div>
<div class="r" style="left:333.10px;top:473px;width:498.50px;height:2px;background:linear-gradient(90deg,transparent 0 2.9px,#8C8C8C 2.9px 4.7px) right 0 top 0/4.7px 2px repeat-x"></div>
<div class="t" style="left:455.00px;width:400px;text-align:right;top:461.00px;font-size:17px;color:#8C8C8C;-webkit-text-stroke:0;">15</div>
<div class="t" style="left:232.30px;top:492.00px;font-size:17px;color:#8C8C8C;-webkit-text-stroke:0;transform:scaleX(0.9987);transform-origin:0 0;">Пророк</div>
<div class="r" style="left:292.20px;top:504px;width:539.40px;height:2px;background:linear-gradient(90deg,transparent 0 2.9px,#8C8C8C 2.9px 4.7px) right 0 top 0/4.7px 2px repeat-x"></div>
<div class="t" style="left:455.00px;width:400px;text-align:right;top:492.00px;font-size:17px;color:#8C8C8C;-webkit-text-stroke:0;">16</div>
<div class="t" style="left:232.30px;top:523.00px;font-size:17px;color:#8C8C8C;-webkit-text-stroke:0;transform:scaleX(0.9740);transform-origin:0 0;">У лукоморья дуб зеленый…</div>
<div class="r" style="left:450.50px;top:535px;width:381.10px;height:2px;background:linear-gradient(90deg,transparent 0 2.9px,#8C8C8C 2.9px 4.7px) right 0 top 0/4.7px 2px repeat-x"></div>
<div class="t" style="left:455.00px;width:400px;text-align:right;top:523.00px;font-size:17px;color:#8C8C8C;-webkit-text-stroke:0;">16</div>
<div class="t" style="left:232.30px;top:554.00px;font-size:17px;color:#8C8C8C;-webkit-text-stroke:0;transform:scaleX(0.9721);transform-origin:0 0;">Няне</div>
<div class="r" style="left:274.00px;top:566px;width:557.60px;height:2px;background:linear-gradient(90deg,transparent 0 2.9px,#8C8C8C 2.9px 4.7px) right 0 top 0/4.7px 2px repeat-x"></div>
<div class="t" style="left:455.00px;width:400px;text-align:right;top:554.00px;font-size:17px;color:#8C8C8C;-webkit-text-stroke:0;">17</div>
<div class="t" style="left:232.30px;top:586.00px;font-size:17px;color:#8C8C8C;-webkit-text-stroke:0;transform:scaleX(0.9804);transform-origin:0 0;">Осень (отрывок)</div>
<div class="r" style="left:362.00px;top:598px;width:469.60px;height:2px;background:linear-gradient(90deg,transparent 0 2.9px,#8C8C8C 2.9px 4.7px) right 0 top 0/4.7px 2px repeat-x"></div>
<div class="t" style="left:455.00px;width:400px;text-align:right;top:586.00px;font-size:17px;color:#8C8C8C;-webkit-text-stroke:0;">18</div>
<div class="t" style="left:232.30px;top:617.00px;font-size:17px;color:#8C8C8C;-webkit-text-stroke:0;transform:scaleX(0.9959);transform-origin:0 0;">Зимний вечер</div>
<div class="r" style="left:344.40px;top:629px;width:487.20px;height:2px;background:linear-gradient(90deg,transparent 0 2.9px,#8C8C8C 2.9px 4.7px) right 0 top 0/4.7px 2px repeat-x"></div>
<div class="t" style="left:455.00px;width:400px;text-align:right;top:617.00px;font-size:17px;color:#8C8C8C;-webkit-text-stroke:0;">18</div>
<div class="r" style="left:120px;top:268.5px;width:791px;height:1px;background:repeating-linear-gradient(90deg,#8C8C8C 0 4px,transparent 4px 6px) 4px 0"></div>
<div class="r" style="left:232px;top:248px;width:1px;height:21px;background:#000;"></div>
<div class="r" style="left:124px;top:269px;width:213px;height:18px;background:#E3E3E3;border:1px solid #7A7A7A"></div>
<div class="t" style="left:127.00px;top:273.00px;font-size:11.7px;color:#333;-webkit-text-stroke:0.2px #333;">Верхний колонтитул первой страницы</div>
<div class="r" style="left:694px;top:151px;width:327px;height:89px;background:#fff;border:1px solid #C6C6C6;box-shadow:1px 2px 3px rgba(0,0,0,0.12)"></div>
<div class="r" style="left:701px;top:157px;width:13px;height:13px;background:#A3A3A3;"></div>
<div class="r" style="left:702px;top:158px;width:11px;height:11px;background:#FFFFFF;"></div>
<svg class="r" style="left:701px;top:157px;" width="13" height="13" viewBox="0 0 13 13"><path d="M2.6 6.6l2.6 3L10.8 3.2" fill="none" stroke="#858585" stroke-width="1.5"/></svg>
<div class="t" style="left:718.90px;top:160.00px;font-size:11.85px;color:#333;">Особый колонтитул для первой страницы</div>
<div class="r" style="left:701px;top:180px;width:13px;height:13px;background:#A3A3A3;"></div>
<div class="r" style="left:702px;top:181px;width:11px;height:11px;background:#FFFFFF;"></div>
<div class="t" style="left:718.90px;top:183.00px;font-size:11.85px;color:#333;">Разные колонтитулы для четных и нечетных страниц</div>
<div class="r" style="left:701px;top:203px;width:13px;height:13px;background:#A3A3A3;"></div>
<div class="r" style="left:702px;top:204px;width:11px;height:11px;background:#FFFFFF;"></div>
<svg class="r" style="left:701px;top:203px;" width="13" height="13" viewBox="0 0 13 13"><path d="M2.6 6.6l2.6 3L10.8 3.2" fill="none" stroke="#858585" stroke-width="1.5"/></svg>
<div class="t" style="left:718.90px;top:206.00px;font-size:11.85px;color:#333;">Показать текст документа</div>
<div class="t" style="left:658.00px;width:400px;text-align:center;top:229.00px;font-size:11.3px;color:#666666;">Параметры</div>
<div class="t" style="left:10.00px;top:655.00px;font-size:11.2px;color:#555;">Страница 1 из 19</div>
<div class="t" style="left:119.00px;top:655.00px;font-size:11px;color:#555;">Число слов: 2430</div>
<svg class="r" style="left:226px;top:653px;" width="16" height="15" viewBox="0 0 16 15"><path d="M1.5 2.5h5l1.5 1v10.5l-1.5-1h-5z" fill="none" stroke="#666"/><path d="M8 3.5l1.5-1h4v3" fill="none" stroke="#666"/><path d="M8 3.5v10.5" stroke="#666"/><path d="M10 7l3.5 4M13.5 7L10 11" stroke="#555" stroke-width="1.1"/><path d="M9.5 13h4.5" stroke="#555"/></svg>
<div class="t" style="left:259.80px;top:655.00px;font-size:11.3px;color:#555;">русский</div>
<svg class="r" style="left:728px;top:650px;" width="60" height="20" viewBox="0 0 60 20"><path d="M4.6 4.4h5.2l0.9 0.8 0.9-0.8h5.2v10.2h-5.1l-1 1.1-1-1.1H4.6z" fill="none" stroke="#666" stroke-width="1.2"/><path d="M5.8 6.3h3.6M5.8 8.4h3.6M5.8 10.4h3.6M5.8 12.4h3.6M12 6.3h3.6M12 8.4h3.6M12 10.4h3.6M12 12.4h3.6" stroke="#666" stroke-width="1"/><path d="M10.7 5v11.5" stroke="#666" stroke-width="1" stroke-dasharray="1.2 0.8"/><path d="M9.6 15.3l1.1 1.8 1.1-1.8z" fill="#666"/></svg>
<div class="r" style="left:758px;top:651px;width:38px;height:20px;background:#C8C8C8;"></div>
<svg class="r" style="left:769px;top:653px;" width="17" height="15" viewBox="0 0 17 15"><rect x="1.6" y="1.6" width="13" height="11.8" fill="none" stroke="#666" stroke-width="1.3"/><path d="M4 3.4h8.4M4 5.5h8.4M4 7.5h8.4M4 9.5h8.4M4 11.5h8.4" stroke="#666" stroke-width="1"/></svg>
<svg class="r" style="left:806px;top:652px;" width="17" height="17" viewBox="0 0 17 17"><path d="M8.3 12.8H2.5V2.5h11.4v3.2" fill="none" stroke="#666" stroke-width="1.1"/><path d="M4 4.4h7.8M4 6.5h5.8M4 8.4h3.8M4 10.3h2.8" stroke="#666" stroke-width="1"/><circle cx="12.1" cy="10.9" r="3.9" fill="#6A6A6A"/><path d="M10 8.5l2.5 4.6M12.8 9.4l1.8 1.2" stroke="#E8E8E8" stroke-width="0.9"/></svg>
<div class="r" style="left:839px;top:660px;width:6px;height:2px;background:#555;"></div>
<div class="r" style="left:849px;top:660px;width:100px;height:1px;background:#9A9A9A;"></div>
<div class="r" style="left:897px;top:655px;width:4px;height:11px;background:#666;"></div>
<div class="r" style="left:953px;top:660px;width:8px;height:2px;background:#555;"></div>
<div class="r" style="left:956px;top:657px;width:2px;height:8px;background:#555;"></div>
<div class="t" style="left:977.50px;top:655.00px;font-size:10.5px;color:#555;">100%</div>
<svg class="r" style="left:0;top:0;overflow:visible" width="1024" height="673" viewBox="0 0 1024 673"><defs><filter id="sh" x="-30%" y="-30%" width="160%" height="160%"><feGaussianBlur in="SourceAlpha" stdDeviation="2.2"/><feOffset dx="1.5" dy="3" result="b"/><feComponentTransfer><feFuncA type="linear" slope="0.55"/></feComponentTransfer><feMerge><feMergeNode/><feMergeNode in="SourceGraphic"/></feMerge></filter></defs><g filter="url(#sh)"><path d="M108.2 186.6L170 223.5" stroke="#FF4040" stroke-width="11" stroke-linecap="round"/><path d="M175.5 209.8L159.7 234.7L193 237.7z" fill="#FF4040"/></g></svg>
<svg class="r" style="left:0;top:0;opacity:0.85" width="1024" height="673" viewBox="0 0 1024 673"><rect x="22.5" y="586" width="75" height="60" rx="5" fill="none" stroke="#C4C4C4" stroke-width="1.6"/><rect x="28.2" y="591.5" width="63.3" height="49.5" rx="4" fill="#F0F0F0" stroke="#ABABAB" stroke-width="4"/><path d="M47.5 651v-3.5a2 2 0 0 1 2-2h18a2 2 0 0 1 2 2v3.5" fill="#F6F6F6" stroke="#C4C4C4" stroke-width="1.3"/><path d="M59 622.5L39 602" stroke="#A9A9A9" stroke-width="3.8" stroke-linecap="round"/><path d="M33.3 595.8L46.5 599.5L37 609z" fill="#A9A9A9" stroke="#A9A9A9" stroke-width="1.5" stroke-linejoin="round"/><mask id="m1" maskUnits="userSpaceOnUse" x="0" y="0" width="1024" height="673"><path d="M117.05 606.35H128.35A6 6 0 0 1 134.35 612.35V621.85A6 6 0 0 1 128.35 627.85H117.05A6 6 0 0 1 111.05 621.85V612.35A6 6 0 0 1 117.05 606.35z" fill="none" stroke="#fff" stroke-width="9.2" stroke-linejoin="round"/><path d="M168.6 606.35H147.5Q143 606.35 143 610.8V612.6Q143 617.1 147.5 617.1H160.5Q165 617.1 165 621.6V623.4Q165 627.85 160.5 627.85H139.3" fill="none" stroke="#fff" stroke-width="9.2" stroke-linejoin="round"/><path d="M117.05 606.35H128.35A6 6 0 0 1 134.35 612.35V621.85A6 6 0 0 1 128.35 627.85H117.05A6 6 0 0 1 111.05 621.85V612.35A6 6 0 0 1 117.05 606.35z" fill="none" stroke="#000" stroke-width="6.2" stroke-linejoin="round"/><path d="M168.6 606.35H147.5Q143 606.35 143 610.8V612.6Q143 617.1 147.5 617.1H160.5Q165 617.1 165 621.6V623.4Q165 627.85 160.5 627.85H139.3" fill="none" stroke="#000" stroke-width="6.2" stroke-linejoin="round"/></mask><rect x="100" y="590" width="240" height="55" fill="#A8A8A8" mask="url(#m1)"/><g opacity="0.95"><path d="M117.05 606.35H128.35A6 6 0 0 1 134.35 612.35V621.85A6 6 0 0 1 128.35 627.85H117.05A6 6 0 0 1 111.05 621.85V612.35A6 6 0 0 1 117.05 606.35z" fill="none" stroke="#FFB4C6" stroke-width="6.2" stroke-linejoin="round"/><path d="M168.6 606.35H147.5Q143 606.35 143 610.8V612.6Q143 617.1 147.5 617.1H160.5Q165 617.1 165 621.6V623.4Q165 627.85 160.5 627.85H139.3" fill="none" stroke="#FFB4C6" stroke-width="6.2" stroke-linejoin="round"/></g><mask id="m2" maskUnits="userSpaceOnUse" x="0" y="0" width="1024" height="673"><path d="M186.55 602.2V632.2M208.75 602.2V632.2M186.55 617.2H208.75" fill="none" stroke="#fff" stroke-width="9.2" stroke-linejoin="round"/><path d="M232.9 627.55H222.45Q218.45 627.55 218.45 623.55V617.45Q218.45 613.45 222.45 613.45H225.15Q229.15 613.45 229.15 617.45V620.5H218.45" fill="none" stroke="#fff" stroke-width="9.2" stroke-linejoin="round"/><path d="M242.8 601.4V631.3" fill="none" stroke="#fff" stroke-width="9.2" stroke-linejoin="round"/><path d="M254.75 609.7V637.2M254.75 613.45H263.25Q267.25 613.45 267.25 617.45V623.55Q267.25 627.55 263.25 627.55H254.75" fill="none" stroke="#fff" stroke-width="9.2" stroke-linejoin="round"/><path d="M299.4 627.55H288.95Q284.95 627.55 284.95 623.55V617.45Q284.95 613.45 288.95 613.45H291.65Q295.65 613.45 295.65 617.45V620.5H284.95" fill="none" stroke="#fff" stroke-width="9.2" stroke-linejoin="round"/><path d="M311.05 631.3V617.45Q311.05 613.45 315.05 613.45H324.3" fill="none" stroke="#fff" stroke-width="9.2" stroke-linejoin="round"/><path d="M186.55 602.2V632.2M208.75 602.2V632.2M186.55 617.2H208.75" fill="none" stroke="#000" stroke-width="6.2" stroke-linejoin="round"/><path d="M232.9 627.55H222.45Q218.45 627.55 218.45 623.55V617.45Q218.45 613.45 222.45 613.45H225.15Q229.15 613.45 229.15 617.45V620.5H218.45" fill="none" stroke="#000" stroke-width="6.2" stroke-linejoin="round"/><path d="M242.8 601.4V631.3" fill="none" stroke="#000" stroke-width="6.2" stroke-linejoin="round"/><path d="M254.75 609.7V637.2M254.75 613.45H263.25Q267.25 613.45 267.25 617.45V623.55Q267.25 627.55 263.25 627.55H254.75" fill="none" stroke="#000" stroke-width="6.2" stroke-linejoin="round"/><path d="M299.4 627.55H288.95Q284.95 627.55 284.95 623.55V617.45Q284.95 613.45 288.95 613.45H291.65Q295.65 613.45 295.65 617.45V620.5H284.95" fill="none" stroke="#000" stroke-width="6.2" stroke-linejoin="round"/><path d="M311.05 631.3V617.45Q311.05 613.45 315.05 613.45H324.3" fill="none" stroke="#000" stroke-width="6.2" stroke-linejoin="round"/></mask><rect x="100" y="590" width="240" height="55" fill="#A8A8A8" mask="url(#m2)"/><g opacity="0.55"><path d="M186.55 602.2V632.2M208.75 602.2V632.2M186.55 617.2H208.75" fill="none" stroke="#FFFFFF" stroke-width="6.2" stroke-linejoin="round"/><path d="M232.9 627.55H222.45Q218.45 627.55 218.45 623.55V617.45Q218.45 613.45 222.45 613.45H225.15Q229.15 613.45 229.15 617.45V620.5H218.45" fill="none" stroke="#FFFFFF" stroke-width="6.2" stroke-linejoin="round"/><path d="M242.8 601.4V631.3" fill="none" stroke="#FFFFFF" stroke-width="6.2" stroke-linejoin="round"/><path d="M254.75 609.7V637.2M254.75 613.45H263.25Q267.25 613.45 267.25 617.45V623.55Q267.25 627.55 263.25 627.55H254.75" fill="none" stroke="#FFFFFF" stroke-width="6.2" stroke-linejoin="round"/><path d="M299.4 627.55H288.95Q284.95 627.55 284.95 623.55V617.45Q284.95 613.45 288.95 613.45H291.65Q295.65 613.45 295.65 617.45V620.5H284.95" fill="none" stroke="#FFFFFF" stroke-width="6.2" stroke-linejoin="round"/><path d="M311.05 631.3V617.45Q311.05 613.45 315.05 613.45H324.3" fill="none" stroke="#FFFFFF" stroke-width="6.2" stroke-linejoin="round"/></g></svg>
</body></html>
